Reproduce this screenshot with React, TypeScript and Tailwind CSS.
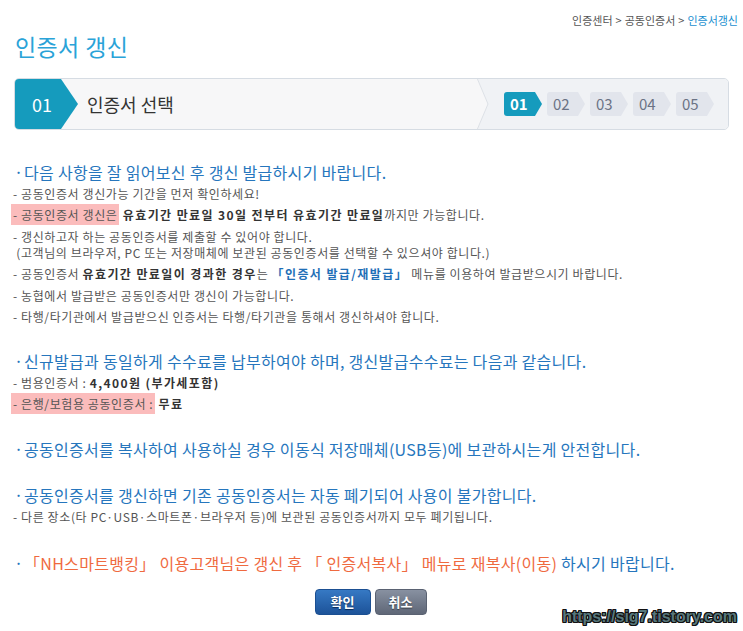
import React from 'react';

const STEPS = ['01', '02', '03', '04', '05'];

function Heading({ children, className = '' }: { children: React.ReactNode; className?: string }) {
  return (
    <div className={`flex items-start text-[16px] leading-[16px] text-[#2676bd] ${className}`}>
      <span className="w-[9px] shrink-0 text-[12px] font-bold">·</span>
      <span className="tracking-[0.3px]">{children}</span>
    </div>
  );
}

function Item({ children }: { children: React.ReactNode }) {
  return <div className="mt-[5.5px] text-[12px] leading-[16px] text-[#555] tracking-[0.6px]">{children}</div>;
}

function Strong({ children, className = 'text-[#333]' }: { children: React.ReactNode; className?: string }) {
  return <b className={`tracking-[1.4px] ${className}`}>{children}</b>;
}

function Mark({ children }: { children: React.ReactNode }) {
  return <span className="bg-[#fbbcbc] px-[2px] py-[2px] -ml-[2px]">{children}</span>;
}

export default function App() {
  return (
    <div
      className="relative h-[631px] w-[743px] overflow-hidden bg-white"
      style={{ fontFamily: '"Noto Sans CJK KR", "Noto Sans", sans-serif' }}
    >
      <div className="flex justify-end pt-[13px] pr-[5px] text-[11px] leading-[14px] text-[#555]">
        인증센터 <span className="mx-[3px]">&gt;</span> 공동인증서 <span className="mx-[3px]">&gt;</span>{' '}
        <span className="text-[#1a8fd0]">인증서갱신</span>
      </div>

      <h1 className="mt-[6px] pl-[15px] text-[23px] leading-[26px] font-normal tracking-[0.4px] text-[#2aa3d8]">인증서 갱신</h1>

      <div className="mx-[14px] mt-[19px] flex h-[52px] overflow-hidden rounded-[5px] border border-[#d6dce3] bg-[#f7f7f8]">
        <div className="flex w-[63px] shrink-0 items-center bg-[#159bbd] pl-[17px] text-[18px] text-white [clip-path:polygon(0_0,46px_0,100%_50%,46px_100%,0_100%)]">
          01
        </div>
        <div className="ml-[9px] flex flex-1 items-center text-[18px] text-[#333]">인증서 선택</div>
        <div className="flex shrink-0 bg-[#f0f2f5]">
          <svg width="14" height="52" viewBox="0 0 14 52" className="-mt-px">
            <polygon points="0,0 2,0 13,26 2,52 0,52" fill="#f7f7f8" />
            <polyline points="2,0 13,26 2,52" fill="none" stroke="#dde1e6" strokeWidth="1" />
          </svg>
          <div className="flex items-center gap-[5px] pl-[15px] pr-[14px]">
            {STEPS.map((s, i) => (
              <div
                key={s}
                className={`flex h-[24px] w-[38px] items-center rounded-l-[3px] pl-[6px] text-[15px] [clip-path:polygon(0_0,31px_0,100%_50%,31px_100%,0_100%)] ${
                  i === 0 ? 'bg-[#159bbd] font-bold text-white' : 'bg-[#e2e5ec] text-[#6b7385]'
                }`}
              >
                {s}
              </div>
            ))}
          </div>
        </div>
      </div>

      <div className="mt-[34px] pl-[15px]">
        <Heading>다음 사항을 잘 읽어보신 후 갱신 발급하시기 바랍니다.</Heading>
        <div className="-ml-[2px]">
          <Item>- 공동인증서 갱신가능 기간을 먼저 확인하세요!</Item>
          <Item>
            <Mark>- 공동인증서 갱신은</Mark> <Strong>유효기간 만료일 30일 전부터 유효기간 만료일</Strong>까지만 가능합니다.
          </Item>
          <Item>
            - 갱신하고자 하는 공동인증서를 제출할 수 있어야 합니다.
            <br />
            &nbsp;(고객님의 브라우저, PC 또는 저장매체에 보관된 공동인증서를 선택할 수 있으셔야 합니다.)
          </Item>
          <Item>
            - 공동인증서 <Strong>유효기간 만료일이 경과한 경우</Strong>는{' '}
            <Strong className="text-[#1f6fb7]">「인증서 발급/재발급」</Strong> 메뉴를 이용하여 발급받으시기 바랍니다.
          </Item>
          <Item>- 농협에서 발급받은 공동인증서만 갱신이 가능합니다.</Item>
          <Item>- 타행/타기관에서 발급받으신 인증서는 타행/타기관을 통해서 갱신하셔야 합니다.</Item>
        </div>

        <Heading className="mt-[28px]">신규발급과 동일하게 수수료를 납부하여야 하며, 갱신발급수수료는 다음과 같습니다.</Heading>
        <div className="-ml-[2px]">
          <Item>
            - 범용인증서 : <Strong>4,400원 (부가세포함)</Strong>
          </Item>
          <Item>
            <Mark>- 은행/보험용 공동인증서 :</Mark> <Strong>무료</Strong>
          </Item>
        </div>

        <Heading className="mt-[29px]">공동인증서를 복사하여 사용하실 경우 이동식 저장매체(USB등)에 보관하시는게 안전합니다.</Heading>

        <Heading className="mt-[30px]">공동인증서를 갱신하면 기존 공동인증서는 자동 폐기되어 사용이 불가합니다.</Heading>
        <div className="-ml-[2px]">
          <Item>- 다른 장소(타 PC·USB·스마트폰·브라우저 등)에 보관된 공동인증서까지 모두 폐기됩니다.</Item>
        </div>

        <Heading className="mt-[30px]">
          <span className="text-[#ef6a3f]">「NH스마트뱅킹」 이용고객님은 갱신 후 「 인증서복사」 메뉴로 재복사(이동)</span> 하시기
          바랍니다.
        </Heading>
      </div>

      <div className="mt-[18px] flex justify-center gap-[4px] pr-[2px]">
        <button className="h-[26px] w-[56px] rounded-[4px] border border-[#1b4f92] bg-gradient-to-b from-[#3679c4] to-[#1d5399] text-[13px] font-bold text-white [text-shadow:0_1px_1px_#0b2a55]">
          확인
        </button>
        <button className="h-[26px] w-[52px] rounded-[4px] border border-[#5a6272] bg-gradient-to-b from-[#8891a1] to-[#5f6777] text-[13px] font-bold text-white [text-shadow:0_1px_1px_#333a45]">
          취소
        </button>
      </div>

      <div
        className="absolute right-[6px] bottom-[5px] text-[16px] font-bold leading-[19px] text-[#56777c] [text-shadow:1px_1px_0_#111,-1px_-1px_0_#111,1px_-1px_0_#111,-1px_1px_0_#111,0_1px_0_#111,0_-1px_0_#111,1px_0_0_#111,-1px_0_0_#111]"
        style={{ fontFamily: '"Liberation Sans", Arial, sans-serif' }}
      >
        https://sig7.tistory.com
      </div>
    </div>
  );
}
